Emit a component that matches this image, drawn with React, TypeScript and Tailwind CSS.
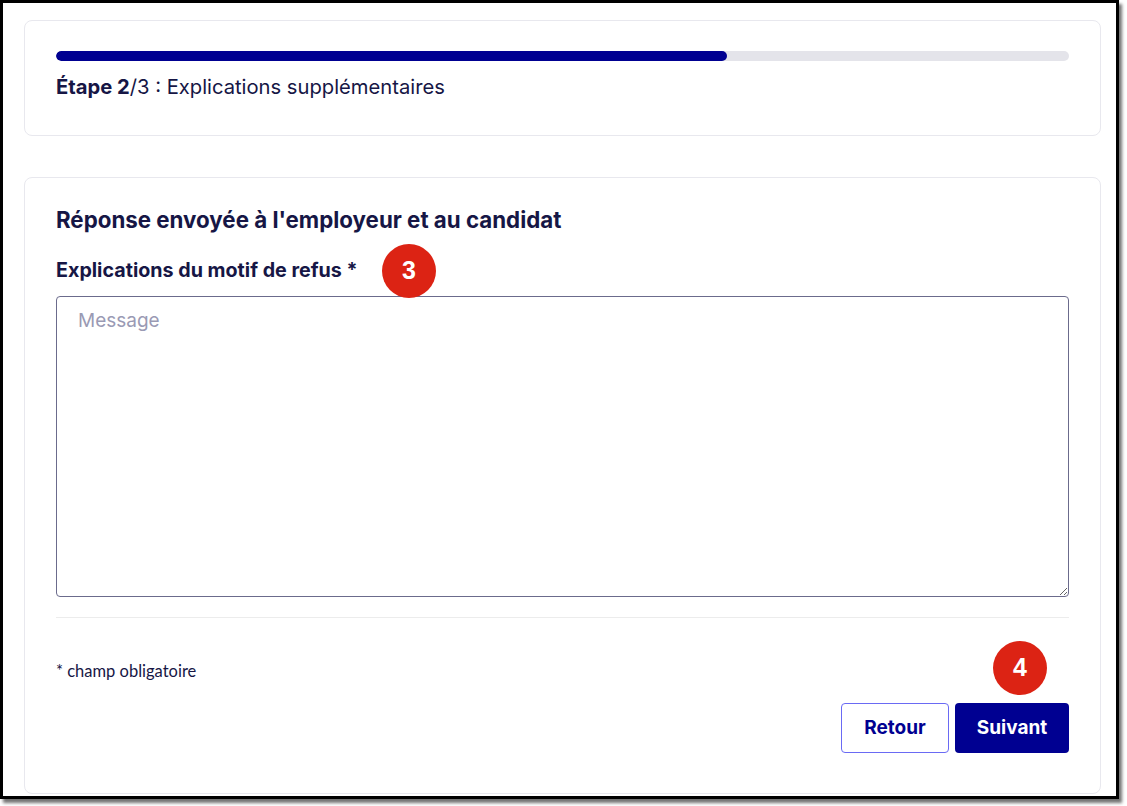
import React from 'react';

const Badge: React.FC<{ n: string; className?: string }> = ({ n, className }) => (
  <span
    className={`absolute flex h-[54px] w-[54px] items-center justify-center rounded-full bg-[#dc2314] text-[25px] font-bold text-white ${className ?? ''}`}
    style={{ fontFamily: '"Liberation Sans", Arial, sans-serif' }}
  >
    {n}
  </span>
);

const App: React.FC = () => {
  return (
    <div className="h-[806px] w-[1127px] bg-white">
      <div
        className="h-[799px] w-[1119px] border-[3px] border-black bg-white pl-[21px] pr-[15px] pt-[17px] shadow-[3px_4px_3px_rgba(0,0,0,0.55)] text-[#161645]"
        style={{ fontFamily: 'Inter, "Noto Sans", sans-serif' }}
      >
        {/* Step progress */}
        <div className="h-[116px] rounded-lg border border-[#e8e8ee] px-[31px] pt-[30px]">
          <div className="h-[10px] w-full overflow-hidden rounded-full bg-[#e4e4ea]">
            <div className="h-full w-[66.2%] rounded-full bg-[#000091]" />
          </div>
          <p className="mt-[12px] text-[20.2px] leading-7">
            <span className="font-bold">Étape 2</span>/3 : Explications supplémentaires
          </p>
        </div>

        {/* Form */}
        <div className="mt-[41px] h-[617px] rounded-lg border border-[#e8e8ee] px-[31px] pt-[26px]">
          <h2 className="text-[22.3px] font-bold leading-8">Réponse envoyée à l'employeur et au candidat</h2>
          <div className="relative mt-[20px]">
            <label className="text-[19.7px] font-bold leading-7">Explications du motif de refus *</label>
            <Badge n="3" className="left-[326px] top-[-12px]" />
          </div>
          <textarea
            placeholder="Message"
            className="mt-[12px] block h-[301px] w-full resize-y rounded-[4px] border border-[#6b6b8c] px-[21px] py-[10px] text-[19px] placeholder:text-[#9a9ab4] outline-none"
          />
          <div className="mt-[20px] h-px w-full bg-[#ececec]" />
          <p
            className="mt-[43px] text-[16.5px] leading-5"
            style={{ fontFamily: 'Lato, sans-serif' }}
          >
            * champ obligatoire
          </p>
          <div className="relative mt-[22px] flex justify-end gap-[6px]">
            <button className="h-[50px] w-[108px] rounded-[4px] border border-[#6a6af4] bg-white text-[19px] font-bold text-[#000091]">
              Retour
            </button>
            <button className="h-[50px] w-[114px] rounded-[4px] bg-[#000091] text-[19px] font-bold text-white">
              Suivant
            </button>
            <Badge n="4" className="right-[22px] top-[-62px]" />
          </div>
        </div>
      </div>
    </div>
  );
};

export default App;
